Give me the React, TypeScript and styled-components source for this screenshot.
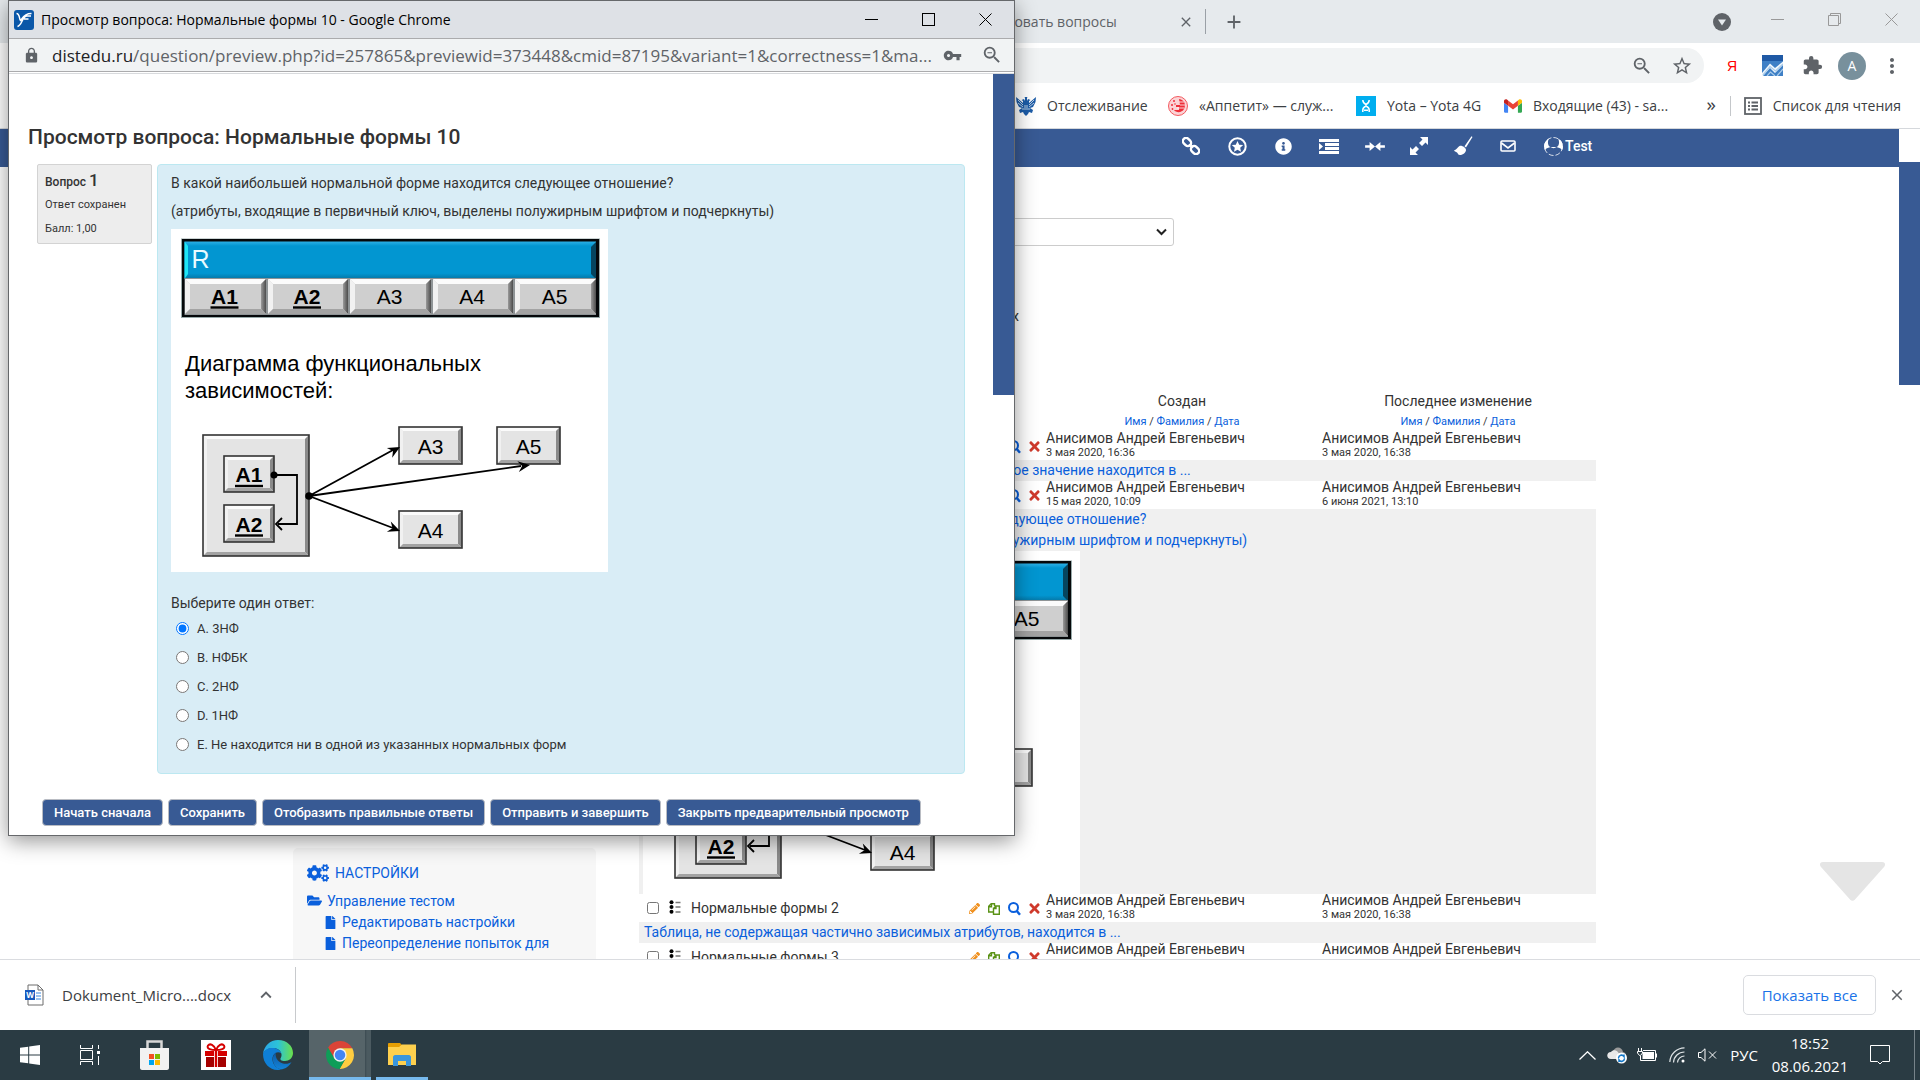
import React from "react";
import styled, { createGlobalStyle, css } from "styled-components";
import { MdLock, MdVpnKey, MdStarBorder, MdExtension, MdMoreVert, MdZoomOut, MdAdd, MdClose, MdKeyboardArrowUp } from "react-icons/md";
import { FaCogs, FaFolderOpen, FaFile, FaInfoCircle, FaTimes, FaPencilAlt } from "react-icons/fa";

const GlobalStyle = createGlobalStyle`
  *, *::before, *::after { box-sizing: border-box; }
  html, body, #root { height: 100%; margin: 0; }
  body { overflow: hidden; background: #fff; }
  button, input, select { font: inherit; margin: 0; }
  a { color: #0a5fdc; text-decoration: none; }
  p, h1, h2, ul { margin: 0; padding: 0; }
  ul { list-style: none; }
`;

const uiFont = `"Open Sans", "Noto Sans", sans-serif`;
const siteFont = `Roboto, "Liberation Sans", sans-serif`;
const navy = "#385a94";

const Desktop = styled.div`
  position: relative;
  height: 100vh;
  display: flex;
  flex-direction: column;
  overflow: hidden;
  font-family: ${uiFont};
  font-size: 14px;
  color: #3c4043;
`;

const iconButton = css`
  border: 0;
  padding: 0;
  background: none;
  color: inherit;
  display: flex;
  align-items: center;
  justify-content: center;
`;

const IconButton = styled.button<{ $w?: number; $h?: number }>`
  ${iconButton}
  flex: none;
  width: ${(p) => p.$w ?? 40}px;
  height: ${(p) => p.$h ?? 30}px;
`;

/* ---------- main browser window ---------- */

const Browser = styled.main`
  flex: 1;
  min-height: 0;
  display: flex;
  flex-direction: column;
`;

const TabStrip = styled.div`
  flex: none;
  height: 43px;
  display: flex;
  align-items: center;
  background: #e6eaed;
  color: #5f6368;
`;

const Tab = styled.div`
  width: 1206px;
  height: 25px;
  display: flex;
  align-items: center;
  justify-content: flex-end;
  border-right: 1px solid #9aa0a6;
  span { width: 216px; }
`;

const Spacer = styled.div`
  flex: 1;
`;

const CaptionButtons = styled.div`
  display: flex;
  align-self: flex-start;
  height: 38px;
  margin-left: 13px;
  color: #999;
`;

const Toolbar = styled.div`
  flex: none;
  height: 45px;
  display: flex;
  align-items: center;
  padding: 0 8px 0 120px;
  color: #5f6368;
`;

const Omnibox = styled.div`
  flex: 1;
  height: 35px;
  margin-right: 8px;
  padding-right: 2px;
  display: flex;
  align-items: center;
  border-radius: 18px;
  background: #f1f3f4;
`;

const OmniboxInput = styled.input`
  flex: 1;
  min-width: 0;
  border: 0;
  padding: 0 20px;
  background: none;
`;

const YandexMark = styled.span`
  color: #f00;
  font: 14px/20px "Liberation Sans", sans-serif;
`;

const Avatar = styled.button`
  ${iconButton}
  width: 28px;
  height: 28px;
  margin: 0 6px;
  border-radius: 50%;
  background: #78909c;
  color: #fff;
  font-size: 14px;
`;

const BookmarksBar = styled.nav`
  flex: none;
  height: 41px;
  padding: 0 19px 5px 1016px;
  display: flex;
  align-items: center;
  border-bottom: 1px solid #d5d8dc;
  white-space: nowrap;
`;

const Bookmark = styled.a<{ $w?: number }>`
  flex: none;
  width: ${(p) => (p.$w ? `${p.$w}px` : "auto")};
  display: flex;
  align-items: center;
  gap: 11px;
  color: #3c4043;
`;

const Chevrons = styled.button`
  ${iconButton}
  width: 17px;
  margin-bottom: 4px;
  font-size: 19px;
`;

const Divider = styled.span`
  width: 1px;
  height: 20px;
  margin: 0 13px 0 10px;
  background: #c4c7ca;
`;

const Viewport = styled.div`
  flex: 1;
  min-height: 0;
  display: flex;
  overflow: hidden;
  font-family: ${siteFont};
  color: #333;
`;

const Page = styled.div`
  position: relative;
  flex: 1;
  min-width: 0;
  overflow: hidden;
`;

const ScrollTrack = styled.div<{ $top: number }>`
  flex: none;
  width: 21px;
  padding-top: ${(p) => p.$top}px;
  background: #fff;
`;

const ScrollThumb = styled.div<{ $h: number }>`
  height: ${(p) => p.$h}px;
  background: ${navy};
`;

const SiteNav = styled.nav`
  height: 38px;
  display: flex;
  align-items: center;
  padding: 0 307px 4px 1168px;
  background: ${navy};
  color: #fff;
`;

const UserLink = styled.a`
  display: flex;
  align-items: center;
  gap: 2px;
  padding-left: 14px;
  color: #fff;
  font-size: 14px;
  font-weight: 500;
`;

const Columns = styled.div`
  display: grid;
  grid-template-columns: 303px minmax(0, 1fr);
  column-gap: 43px;
  padding: 0 303px 0 293px;
`;

const SettingsBlock = styled.section`
  align-self: start;
  margin-top: 681px;
  padding: 12px 14px;
  border-radius: 5px;
  background: #f7f7f7;
  color: #0a5fdc;
  font-size: 14px;
  line-height: 21px;
`;

const BlockTitle = styled.h2`
  display: flex;
  align-items: center;
  gap: 6px;
  height: 26px;
  margin-bottom: 5px;
  font-size: 14px;
  font-weight: 400;
`;

const TreeItem = styled.li<{ $level: number }>`
  padding-left: ${(p) => p.$level * 17}px;
  svg { margin-right: 5px; vertical-align: -2px; }
`;

const BankColumn = styled.section`
  padding-top: 51px;
`;

const CategorySelect = styled.select`
  display: block;
  width: 535px;
  height: 28px;
  padding: 0 8px;
  border: 1px solid #ccc;
  border-radius: 3px;
  background: #fff;
  color: #333;
  font-size: 14px;
  appearance: none;
`;

const SelectWrap = styled.div`
  position: relative;
  width: 535px;
  svg { position: absolute; right: 7px; top: 10px; pointer-events: none; }
`;

const FilterLine = styled.label`
  display: flex;
  align-items: center;
  gap: 5px;
  width: 380px;
  justify-content: flex-end;
  height: 20px;
  margin: 60px 0 65px;
  font-size: 14px;
  white-space: nowrap;
`;

const BankTable = styled.table`
  width: 100%;
  table-layout: fixed;
  border-collapse: collapse;
  font-size: 14px;
  td, th { padding: 0 2px; font-weight: 400; }
`;

const HeadCell = styled.th`
  height: 41px;
  line-height: 21px;
  text-align: center;
  div { font-size: 11px; line-height: 20px; }
`;

const Name = styled.div`
  height: 13px;
  line-height: 13px;
`;

const When = styled.div`
  height: 15px;
  font-size: 11px;
  line-height: 15px;
`;

const RowCheckbox = styled.input`
  display: block;
  width: 12px;
  height: 12px;
  margin-left: 6px;
`;

const Actions = styled.div`
  display: flex;
  margin-left: -4px;
  padding-top: 1px;
`;

const TextCell = styled.td`
  background: #f0f0f0;
  && { padding: 0 5px; }
  line-height: 21px;
  svg { display: block; margin-left: -1px; }
`;

const ToBottom = styled.button`
  ${iconButton}
  position: absolute;
  right: 14px;
  bottom: 58px;
`;

const Downloads = styled.aside`
  flex: none;
  height: 71px;
  padding: 0 2px 0 24px;
  display: flex;
  align-items: center;
  border-top: 1px solid #dadce0;
  background: #fff;
  font-size: 15px;
`;

const DownloadItem = styled.div`
  display: flex;
  align-items: center;
  gap: 18px;
  width: 272px;
  height: 56px;
  border-right: 1px solid #c8cacd;
  svg { flex: none; }
  span { flex: 1; }
  button { margin-left: -18px; }
`;

const ShowAll = styled.button`
  width: 133px;
  height: 40px;
  border: 1px solid #dadce0;
  border-radius: 5px;
  background: #fff;
  color: #1a73e8;
  font-size: 15px;
`;

/* ---------- preview window ---------- */

const Popup = styled.section`
  position: absolute;
  left: 8px;
  top: 0;
  width: 1007px;
  height: 836px;
  display: flex;
  flex-direction: column;
  border: 1px solid #66686b;
  background: #fff;
  box-shadow: 0 5px 20px rgba(0, 0, 0, 0.42);
`;

const TitleBar = styled.header`
  flex: none;
  height: 38px;
  display: flex;
  align-items: center;
  padding-left: 5px;
  border-bottom: 1px solid #ababad;
  background: #dee1e6;
  color: #000;
  span { margin-left: 7px; }
`;

const AddressBar = styled.div`
  flex: none;
  height: 35px;
  display: flex;
  align-items: center;
  padding: 0 2px 2px 14px;
  border-bottom: 1px solid #d8dadd;
  background: #f1f3f4;
  box-shadow: inset 0 -1px #fff, inset 0 -2px #ababad;
  color: #5f6368;
`;

const Url = styled.div`
  flex: 1;
  margin-left: 12px;
  overflow: hidden;
  font-size: 17px;
  white-space: nowrap;
  b { font-weight: 400; color: #202124; }
`;

const PopupBody = styled.div`
  flex: 1;
  min-height: 0;
  display: flex;
  font-family: ${siteFont};
  color: #333;
`;

const Preview = styled.div`
  flex: 1;
  padding: 50px 28px 0 19px;
`;

const PreviewTitle = styled.h1`
  margin-bottom: 14px;
  font-size: 21px;
  font-weight: 500;
  line-height: 26px;
`;

const Question = styled.div`
  display: flex;
  gap: 5px;
  margin-left: 9px;
`;

const InfoBox = styled.div`
  flex: none;
  align-self: flex-start;
  width: 115px;
  height: 80px;
  padding: 4px 7px;
  border: 1px solid #d3d3d3;
  border-radius: 2px;
  background: #ededed;
  font-size: 11px;
  line-height: 24px;
  h2 { font-size: 12px; font-weight: 500; line-height: 22px; }
  h2 b { font-size: 17px; font-weight: 500; }
`;

const Formulation = styled.div`
  flex: 1;
  padding: 9px 13px 14px;
  border: 1px solid #bce8f1;
  border-radius: 4px;
  background: #d9edf6;
  font-size: 14px;
  line-height: 19px;
  p { margin-bottom: 9px; }
  p + p { margin-bottom: 8px; }
  > svg { display: block; }
`;

const Answers = styled.fieldset`
  margin: 22px 0 0;
  padding: 0;
  border: 0;
  font-size: 13px;
  legend { padding: 0; margin-bottom: 1px; font-size: 14px; }
`;

const Answer = styled.label`
  display: flex;
  align-items: center;
  gap: 8px;
  height: 29px;
  padding-left: 5px;
  input { width: 13px; height: 13px; accent-color: #0075ff; }
`;

const ButtonRow = styled.div`
  display: flex;
  gap: 5px;
  margin: 25px 0 0 14px;
`;

const Button = styled.button`
  height: 27px;
  padding: 0 11px;
  border: 1px solid #b9bcc3;
  border-radius: 4px;
  background: ${navy};
  color: #fff;
  font-size: 13px;
  font-weight: 500;
  white-space: nowrap;
`;

/* ---------- taskbar ---------- */

const Taskbar = styled.footer`
  flex: none;
  height: 50px;
  display: flex;
  align-items: stretch;
  padding-right: 5px;
  background: #2a3b43;
  color: #fff;
  font-size: 15px;
`;

const TaskButton = styled.button<{ $w: number; $state?: "active" | "open" }>`
  ${iconButton}
  width: ${(p) => p.$w}px;
  margin-right: ${(p) => (p.$state === "active" ? 5 : 0)}px;
  padding-top: ${(p) => (p.$state ? 3 : 0)}px;
  border-bottom: ${(p) => (p.$state ? "3px solid #76b9ed" : "0")};
  background: ${(p) => (p.$state === "active" ? "linear-gradient(90deg, #566469 56px, #3b4a51 56px, #4b5a60 58px)" : "none")};
`;

const TaskGroup = styled.div`
  display: flex;
  padding-left: 3px;
`;

const Clock = styled.time`
  width: 82px;
  margin: 0 4px 0 3px;
  text-align: center;
  line-height: 23px;
  padding-top: 2px;
`;

const Edge = styled.div`
  width: 1px;
  margin-left: 9px;
  background: #77838a;
`;

/* ---------- drawings ---------- */

const Beveled = ({ x, y, w, h, b = 4, fill = "#e4e4e4", dark = "#8a8a8a" }: { x: number; y: number; w: number; h: number; b?: number; fill?: string; dark?: string }) => (
  <g>
    <rect x={x} y={y} width={w} height={h} fill={fill} />
    <polygon points={`${x},${y} ${x + w},${y} ${x + w - b},${y + b} ${x + b},${y + b}`} fill="#fbfbfb" />
    <polygon points={`${x},${y} ${x + b},${y + b} ${x + b},${y + h - b} ${x},${y + h}`} fill="#f1f1f1" />
    <polygon points={`${x + w},${y} ${x + w},${y + h} ${x + w - b},${y + h - b} ${x + w - b},${y + b}`} fill={dark} />
    <polygon points={`${x},${y + h} ${x + b},${y + h - b} ${x + w - b},${y + h - b} ${x + w},${y + h}`} fill="#a3a3a3" />
  </g>
);

const Node = ({ x, y, w, h, label, bold }: { x: number; y: number; w: number; h: number; label?: string; bold?: boolean }) => (
  <g>
    <Beveled x={x} y={y} w={w} h={h} />
    <rect x={x} y={y} width={w} height={h} fill="none" stroke="#333" strokeWidth="1.6" />
    {label && (
      <text x={x + w / 2} y={y + h / 2 + 8} textAnchor="middle" fontSize="21" fontWeight={bold ? 700 : 400}>
        {label}
      </text>
    )}
    {bold && <path d={`M${x + w / 2 - 14} ${y + h / 2 + 12}h28`} stroke="#000" strokeWidth="2.4" />}
  </g>
);

const ArrowHead = ({ x, y, angle }: { x: number; y: number; angle: number }) => (
  <path d="M0 0L-12 -5.5L-8 0L-12 5.5Z" transform={`translate(${x} ${y}) rotate(${angle})`} />
);

const columnsX = [13, 96, 178, 261, 343, 426];

const Diagram = () => (
  <svg width="437" height="343" viewBox="0 0 437 343" fontFamily='"Liberation Sans", Arial, sans-serif' role="img" aria-label="Диаграмма функциональных зависимостей">
    <defs>
      <linearGradient id="rel" x1="0" y1="0" x2="0" y2="1">
        <stop offset="0" stopColor="#2cb0e6" />
        <stop offset="0.12" stopColor="#0296d1" />
        <stop offset="0.86" stopColor="#0296d1" />
        <stop offset="1" stopColor="#0578a8" />
      </linearGradient>
      <linearGradient id="edgeDark" x1="0" y1="0" x2="1" y2="0">
        <stop offset="0" stopColor="#9a9a9a" />
        <stop offset="1" stopColor="#4c4c4c" />
      </linearGradient>
    </defs>
    <rect width="437" height="343" fill="#fff" />
    <rect x="10" y="9.5" width="419" height="79.5" fill="#9aa" />
    <rect x="11" y="10" width="417" height="78" fill="#05080a" />
    <rect x="13.500" y="12.500" width="411.500" height="37" fill="url(#rel)" />
    <polygon points="13.500,12.500 17,17 17,45 13.500,50" fill="#1fe6f5" />
    <polygon points="425,13 420,18 420,45 425,50" fill="#06455f" />
    <rect x="13.500" y="49" width="411.500" height="37" fill="#8f9496" />
    {columnsX.slice(0, 5).map((x, i) => (
      <g key={x}>
        <Beveled x={x + 1} y={50} w={columnsX[i + 1] - x - 2} h={35} b={5} fill="#cfcfcf" dark="url(#edgeDark)" />
        <text x={(x + columnsX[i + 1]) / 2 - 1} y="74.500" textAnchor="middle" fontSize="21" fontWeight={i < 2 ? 700 : 400}>
          A{i + 1}
        </text>
        {i < 2 && <path d={`M${(x + columnsX[i + 1]) / 2 - 15} 78.500h28`} stroke="#000" strokeWidth="2.4" />}
      </g>
    ))}
    <text x="20.500" y="39" fontSize="25" fill="#e9fbff">R</text>
    <text x="14" y="142" fontSize="22">Диаграмма функциональных</text>
    <text x="14" y="169" fontSize="22">зависимостей:</text>
    <Node x={32} y={206} w={106} h={121} />
    <Node x={53} y={227} w={50} h={36} label="A1" bold />
    <Node x={53} y={276} w={50} h={37} label="A2" bold />
    <Node x={228} y={198} w={63} h={37} label="A3" />
    <Node x={326} y={198} w={63} h={37} label="A5" />
    <Node x={228} y={282} w={63} h={37} label="A4" />
    <g stroke="#000" strokeWidth="1.800" fill="none">
      <path d="M103 246H126V295H107" />
      <path d="M111 289L105 295L111 301" />
      <path d="M138 267L222 221M138 267L350 237M138 267L222 299" />
    </g>
    <circle cx="103" cy="246" r="3.500" />
    <circle cx="138" cy="267" r="3.800" />
    <ArrowHead x={229} y={218} angle={-29} />
    <ArrowHead x={359} y={236} angle={-8} />
    <ArrowHead x={229} y={302} angle={21} />
  </svg>
);

const CaptionIcon = ({ kind }: { kind: "min" | "max" | "restore" | "close" }) => (
  <svg width="13" height="13" viewBox="0 0 13 13" fill="none" stroke="currentColor" strokeWidth="1">
    {kind === "min" && <path d="M0 6.500H13" />}
    {kind === "max" && <rect x="0.500" y="0.500" width="12" height="12" />}
    {kind === "restore" && <path d="M.5 2.500H10.500V12.500H.5ZM2.500 2.500V.5H12.500V10.500H10.500" />}
    {kind === "close" && <path d="M.5.5L12.500 12.500M12.500.5L.5 12.500" />}
  </svg>
);

const SiteLogo = () => (
  <svg width="20" height="20" viewBox="0 0 20 20">
    <rect width="20" height="20" rx="3" fill="#0a57a8" />
    <path d="M2.500 3.500C6 3.500 5 9 6.500 10.500C8.500 9.500 8.500 3.500 17.500 3.500M3.500 16.500C8.500 15 8 6 13 6H17M10 9H14.500" fill="none" stroke="#fff" strokeWidth="1.500" />
  </svg>
);

const ChartExt = () => (
  <svg width="21" height="21" viewBox="0 0 21 21">
    <rect width="21" height="21" fill="#3f80c6" />
    <rect width="21" height="6" fill="#1f59a5" />
    <path d="M0 18L8 8.500L13 13L21 6.500V10L13 18L8 13L1 21H0Z" fill="#f1f7fc" />
    <path d="M1 20L8 11.500L13.500 16L21 9M5 21L8.500 17L13 21M15 21L21 14" fill="none" stroke="#a9cbea" strokeWidth="1.200" />
  </svg>
);

const Eagle = () => (
  <svg width="20" height="20" viewBox="0 0 20 20" fill="#1c5ca8">
    <path d="M0 1L7 7V5L5.500 4L8 3L9 5V2L8.500 1H11.500L11 2V5L12 3L14.500 4L13 5V7L20 1L19.500 6L17 11L14 12L17 14L16 17L13 16L12 18L10 20L8 18L7 16L4 17L3 14L6 12L3 11L.5 6Z" />
    <path d="M2 4L7 9M2 7L7 11M18 4L13 9M18 7L13 11M9 9V14M11 9V14M6 13H8M12 13H14" stroke="#fff" strokeWidth=".7" />
  </svg>
);

const Appetit = () => (
  <svg width="20" height="20" viewBox="0 0 20 20">
    <circle cx="10" cy="10" r="9.500" fill="#fbd3d5" stroke="#f3595f" />
    <path d="M11 3C17 4 18 9 16 13C14 17 8 17 6 14H11V11H8V9H12Z" fill="#ee2e38" />
    <path d="M11 6H16M12 9H17M9 12H16" stroke="#fff" strokeWidth=".8" />
    <g fill="#ee2e38"><circle cx="6" cy="5" r="1" /><circle cx="4" cy="9" r="1" /><circle cx="7" cy="8" r=".8" /><circle cx="4.500" cy="13" r=".9" /></g>
  </svg>
);

const Yota = () => (
  <svg width="20" height="20" viewBox="0 0 20 20">
    <rect width="20" height="20" fill="#00aeef" />
    <path d="M6.800 4C6.800 6 8 7.500 10 8.500C12 7.500 13.200 6 13.200 4M6.800 16V14C6.800 12 8 11 10 10C12 11 13.200 12 13.200 14V16M10 8V10.500M8 14.200H12" stroke="#fff" strokeWidth="1.500" fill="none" />
  </svg>
);

const Gmail = () => (
  <svg width="18" height="14" viewBox="52 42 88 66">
    <path fill="#4285f4" d="M58 108h14V74L52 59v43c0 3.320 2.690 6 6 6" />
    <path fill="#34a853" d="M120 108h14c3.320 0 6-2.690 6-6V59l-20 15" />
    <path fill="#fbbc04" d="M120 48v26l20-15v-8c0-7.420-8.470-11.650-14.400-7.200" />
    <path fill="#ea4335" d="M72 74V48l24 18 24-18v26L96 92" />
    <path fill="#c5221f" d="M52 51v8l20 15V48l-5.600-4.200c-5.940-4.450-14.400-.22-14.400 7.200" />
  </svg>
);

const ReadingList = () => (
  <svg width="18" height="18" viewBox="0 0 18 18" fill="none" stroke="#5f6368" strokeWidth="1.800">
    <rect x="1" y="1" width="16" height="16" />
    <path d="M7.500 5.500H14M7.500 9H14M7.500 12.500H14M4 5.500H6M4 9H6M4 12.500H6" />
  </svg>
);

const DownBadge = () => (
  <svg width="18" height="18" viewBox="0 0 18 18">
    <circle cx="9" cy="9" r="9" fill="#5f6368" />
    <path d="M5 6.500H13L9 12.500Z" fill="#e6eaed" />
  </svg>
);

const ChainIcon = () => (
  <svg width="18" height="18" viewBox="0 0 18 18" fill="none" stroke="#fff" strokeWidth="2.400">
    <g transform="rotate(45 9 9)">
      <rect x="-1.200" y="5.800" width="9" height="6.400" rx="3.200" />
      <rect x="10.200" y="5.800" width="9" height="6.400" rx="3.200" />
      <path d="M6.500 9H11.500" />
    </g>
  </svg>
);

const StarCircle = () => (
  <svg width="19" height="19" viewBox="0 0 19 19">
    <circle cx="9.500" cy="9.500" r="8.200" fill="none" stroke="#fff" strokeWidth="2" />
    <path d="M9.500 4L11.200 7.700L15.200 8.100L12.200 10.800L13 14.700L9.500 12.700L6 14.700L6.800 10.800L3.800 8.100L7.800 7.700Z" fill="#fff" />
  </svg>
);

const IndentIcon = () => (
  <svg width="20" height="15" viewBox="0 0 20 15" fill="#fff">
    <path d="M0 0H20V3H0ZM6 4H20V7H6ZM6 8H20V11H6ZM0 12H20V15H0ZM0 4L4 7.500L0 11Z" />
  </svg>
);

const SqueezeIcon = () => (
  <svg width="22" height="9" viewBox="0 0 22 10" fill="#fff">
    <path d="M0 3.500H5V0L11 5L5 10V6.500H0ZM22 3.500H17V0L11 5L17 10V6.500H22Z" />
  </svg>
);

const ExpandIcon = () => (
  <svg width="18" height="18" viewBox="0 0 18 18" fill="#fff">
    <path d="M10 0H18V8L15.500 5.500L12 9L9 6L12.500 2.500ZM8 18H0V10L2.500 12.500L6 9L9 12L5.500 15.500Z" />
  </svg>
);

const BroomIcon = () => (
  <svg width="19" height="20" viewBox="0 0 19 20" fill="#fff">
    <path d="M18.500 1L12 11.500L10.500 10.300L17.500.3ZM5.500 10C8 9 12 12 12 14C12 17 8 19 6 19C4 19 4 17.500 3 16.500C2 15.500 0 15.500 0 14.500C2 14 4 11 5.500 10Z" />
  </svg>
);

const MailIcon = () => (
  <svg width="16" height="12" viewBox="0 0 16 12" fill="none" stroke="#fff" strokeWidth="1.600">
    <rect x="1" y="1" width="14" height="10" rx="1" />
    <path d="M1.500 3L8 8L14.500 3" />
  </svg>
);

const UserIcon = () => (
  <svg width="19" height="19" viewBox="0 0 19 19">
    <circle cx="9.500" cy="9.500" r="9" fill="none" stroke="#fff" strokeWidth=".8" strokeDasharray="5 2" />
    <path d="M5 1.500C3 5 4 9 6.500 10H12.500C15 9 16 5 14 1.500C19 4 20 10 18 13C17 11 14 10.500 12.500 10C11 11.500 8 11.500 6.500 10C5 10.500 2 11 1 13C-1 10 0 4 5 1.500Z" fill="#fff" />
  </svg>
);

const ChoiceIcon = () => (
  <svg width="12" height="14" viewBox="0 0 12 14">
    <circle cx="2.500" cy="2.200" r="2" /><circle cx="2.500" cy="7" r="2" /><circle cx="2.500" cy="11.800" r="2" />
    <path d="M6.500 2.500H11.500M6.500 7H11.500M6.500 12H11.500" stroke="#777" strokeWidth="1.300" />
  </svg>
);

const CopyIcon = () => (
  <svg width="12" height="12" viewBox="0 0 12 12" fill="none" stroke="#5a9216" strokeWidth="1.400">
    <path d="M5 9H.7V3.200L3.200 .7H6.500V3M.7 3.700H3.500V.7M5.500 5.500L7.800 3H11.300V11.300H5.500V5.500H8V3" />
  </svg>
);

const SearchIcon = () => (
  <svg width="13" height="14" viewBox="0 0 13 14" fill="none" stroke="#0a5fdc" strokeWidth="2">
    <circle cx="5.500" cy="5.500" r="4.500" /><path d="M8.800 9L12 12.800" strokeWidth="2.400" />
  </svg>
);

const WordIcon = () => (
  <svg width="20" height="22" viewBox="0 0 20 22">
    <path d="M4 1H14L19 6V21H4Z" fill="#fff" stroke="#6d6d6d" />
    <path d="M14 1V6H19" fill="none" stroke="#6d6d6d" />
    <path d="M12 9H17M12 12H17M12 15H17" stroke="#3c8ae0" strokeWidth="1.200" />
    <rect x="1" y="6" width="10" height="10" fill="#185abd" />
    <text x="6" y="14" fill="#fff" fontSize="8" fontWeight="700" textAnchor="middle" fontFamily="Open Sans, sans-serif">W</text>
  </svg>
);

const WindowsLogo = () => (
  <svg width="20" height="20" viewBox="0 0 20 20" fill="#fff">
    <path d="M0 2.800L8.200 1.700V9.500H0ZM9.200 1.500L20 0V9.500H9.200ZM0 10.500H8.200V18.300L0 17.200ZM9.200 10.500H20V20L9.200 18.500Z" />
  </svg>
);

const TaskView = () => (
  <svg width="20" height="20" viewBox="0 0 20 20" fill="none" stroke="#fff">
    <path d="M.5 0V3.500H12.500V0M.5 20V16.500H12.500V20M.5 5.500H12.500V14.500H.5ZM18.500 0V4M18.500 11V20" />
    <rect x="17" y="6" width="3" height="3" fill="#fff" stroke="none" />
  </svg>
);

const StoreIcon = () => (
  <svg width="29" height="30" viewBox="0 0 29 30">
    <path d="M7.500 10V1.500H21.500V10" fill="none" stroke="#d8d8d8" strokeWidth="2.500" />
    <path d="M0 8H29V28C29 29 28 30 27 30H2C1 30 0 29 0 28Z" fill="#f2f2f2" />
    <path d="M9 14H14V19H9Z" fill="#f25022" /><path d="M15 14H20V19H15Z" fill="#7fba00" />
    <path d="M9 20H14V25H9Z" fill="#00a4ef" /><path d="M15 20H20V25H15Z" fill="#ffb900" />
  </svg>
);

const GiftIcon = () => (
  <svg width="30" height="30" viewBox="0 0 30 30">
    <rect width="30" height="30" fill="#fff" />
    <path d="M4 11H13V16H4ZM17 11H26V16H17ZM13.800 11H16.200V27H13.800Z" fill="#d50000" />
    <path d="M5 17H13V27H5ZM17 17H25V27H17Z" fill="#a50000" />
    <path d="M15 10C11 10 5 9 7 5.500C9 3 13 5 15 10C17 5 21 3 23 5.500C25 9 19 10 15 10Z" fill="none" stroke="#d50000" strokeWidth="2" />
  </svg>
);

const EdgeIcon = () => (
  <svg width="30" height="30" viewBox="0 0 30 30">
    <defs>
      <linearGradient id="edgeTop" x1="0" x2="1"><stop offset="0" stopColor="#2aa6e8" /><stop offset=".5" stopColor="#2cc3d8" /><stop offset="1" stopColor="#6be04a" /></linearGradient>
      <linearGradient id="edgeLow" x1="0" y1="0" x2="0" y2="1"><stop offset="0" stopColor="#0c59a4" /><stop offset="1" stopColor="#1383d8" /></linearGradient>
    </defs>
    <path d="M0 14C1 6 7 0 15 0C24 0 30 6 30 13C30 18 26 21 22 21C18 21 16.500 19.500 18 17.500C20 14 17 8 10 8C5 8 1 11 0 14Z" fill="url(#edgeTop)" />
    <path d="M0 14C1 10 5 7.500 10 8C14 8 17.500 10.500 18.500 13.500C14 10 9 14 9.500 20C10 25 14 29 19 29.500C9 32 0 25 0 14Z" fill="#0f7fd6" />
    <path d="M13 12.500C9 16 9.500 20 10.500 23C12 27 16 30 20 29C24 28 27 25 28.500 22C26 24 21 24.500 17.500 22.500C13.500 20 12 16 13 12.500Z" fill="url(#edgeLow)" />
  </svg>
);

const ChromeIcon = () => (
  <svg width="28" height="28" viewBox="4 4 40 40">
    <path fill="#db4437" d="M24 14.500H41.600A20 20 0 0 0 6.970 13.520L15.770 28.750Z" />
    <path fill="#ffcd40" d="M32.230 28.750L23.440 43.990A20 20 0 0 0 41.600 14.500H24Z" />
    <path fill="#0f9d58" d="M15.770 28.750L6.970 13.520A20 20 0 0 0 23.440 43.990L32.230 28.750Z" />
    <circle cx="24" cy="24" r="9.500" fill="#f1f1f1" /><circle cx="24" cy="24" r="7.500" fill="#4285f4" />
  </svg>
);

const ExplorerIcon = () => (
  <svg width="28" height="24" viewBox="0 0 28 24">
    <path d="M0 1C0 .5.5 0 1 0H12L14 2V6H0Z" fill="#e59e03" />
    <path d="M0 4H11L14 1.500H28V22H0Z" fill="#fed04e" />
    <path d="M5 23V14C5 13 6 12 7 12H21C22 12 23 13 23 14V23H18V18H10V23Z" fill="#3a96dd" />
  </svg>
);

const TrayChevron = () => (
  <svg width="17" height="9" viewBox="0 0 17 9" fill="none" stroke="#fff" strokeWidth="1.300"><path d="M.5 8.500L8.500 .8L16.500 8.500" /></svg>
);

const CloudIcon = () => (
  <svg width="21" height="18" viewBox="0 0 21 18">
    <path d="M6 6C7 0 15 0 16 6C20 7 20 12 17 12H4Z" fill="#9a9a9a" />
    <path d="M4 13C-1 13 -1 6 4 6C6 3 11 4 12 8L14 13Z" fill="#e8e8e8" />
    <circle cx="14.500" cy="12" r="5.500" fill="#fff" />
    <path d="M11.500 12A3 3 0 0 1 17 10.500V8.500M17.500 12.500A3 3 0 0 1 12 14V16" fill="none" stroke="#1578c8" strokeWidth="1.500" />
  </svg>
);

const BatteryIcon = () => (
  <svg width="20" height="14" viewBox="0 0 20 14" fill="none" stroke="#fff">
    <path d="M6 2.500H18.500V12.500H3.500V8M19.500 5.500V9.500M1.500 0V3M4.500 0V3M.5 3.500H5.500V5L3.500 7.500H2.500L.5 5Z" />
    <rect x="6" y="4.500" width="10.500" height="6" fill="#fff" />
  </svg>
);

const WifiIcon = () => (
  <svg width="16" height="16" viewBox="0 0 16 16" fill="none" stroke="#dfe4e6" strokeWidth="1.200">
    <path d="M.8 15A15 15 0 0 1 15.500 .8M4.500 15.500A11 11 0 0 1 15.500 5M8.500 15.500A7 7 0 0 1 15.500 9" />
    <circle cx="14" cy="14" r="1.500" fill="#fff" stroke="none" />
  </svg>
);

const MuteIcon = () => (
  <svg width="19" height="14" viewBox="0 0 19 14" fill="none" stroke="#fff">
    <path d="M.5 4.500H3L7 .8V13.200L3 9.500H.5ZM11 3.500L18 10.500M18 3.500L11 10.500" />
  </svg>
);

const NoticeIcon = () => (
  <svg width="20" height="20" viewBox="0 0 20 20" fill="none" stroke="#fff"><path d="M.5 .5H19.500V16.500H12.500L10 19L7.500 16.500H.5Z" /></svg>
);

const SelectArrow = () => (
  <svg width="11" height="8" viewBox="0 0 11 8" fill="none" stroke="#222" strokeWidth="2"><path d="M1 1.500L5.500 6L10 1.500" /></svg>
);

/* ---------- question bank ---------- */

type Row = { title: string; created: string; changed: string; text: React.ReactNode };

const author = "Анисимов Андрей Евгеньевич";

const rows: Row[] = [
  {
    title: "Нормальные формы 1",
    created: "3 мая 2020, 16:36",
    changed: "3 мая 2020, 16:38",
    text: <a href="#q1">Таблица, в каждой ячейке которой хранится одно простое значение находится в ...</a>,
  },
  {
    title: "Нормальные формы 10",
    created: "15 мая 2020, 10:09",
    changed: "6 июня 2021, 13:10",
    text: (
      <>
        <a href="#q10">
          В какой наибольшей нормальной форме находится следующее отношение?
          <br />
          (атрибуты, входящие в первичный ключ, выделены полужирным шрифтом и подчеркнуты)
        </a>
        <Diagram />
      </>
    ),
  },
  {
    title: "Нормальные формы 2",
    created: "3 мая 2020, 16:38",
    changed: "3 мая 2020, 16:38",
    text: <a href="#q2">Таблица, не содержащая частично зависимых атрибутов, находится в ...</a>,
  },
  {
    title: "Нормальные формы 3",
    created: "3 мая 2020, 16:38",
    changed: "3 мая 2020, 16:38",
    text: null,
  },
];

const SortLinks = () => (
  <div>
    <a href="#first">Имя</a> / <a href="#last">Фамилия</a> / <a href="#date">Дата</a>
  </div>
);

const QuestionRow = ({ row }: { row: Row }) => (
  <>
    <tr>
      <td><RowCheckbox type="checkbox" aria-label={row.title} /></td>
      <td><ChoiceIcon /></td>
      <td>{row.title}</td>
      <td>
        <Actions>
          <IconButton $w={20} $h={14} aria-label="Редактировать"><FaPencilAlt size={11} color="#f0901e" /></IconButton>
          <IconButton $w={20} $h={14} aria-label="Дублировать"><CopyIcon /></IconButton>
          <IconButton $w={20} $h={14} aria-label="Просмотр"><SearchIcon /></IconButton>
          <IconButton $w={20} $h={14} aria-label="Удалить"><FaTimes size={15} color="#cf3a2c" /></IconButton>
        </Actions>
      </td>
      <td><Name>{author}</Name><When>{row.created}</When></td>
      <td><Name>{author}</Name><When>{row.changed}</When></td>
    </tr>
    {row.text && <tr><TextCell colSpan={6}>{row.text}</TextCell></tr>}
  </>
);

const answers = ["A. 3НФ", "B. НФБК", "C. 2НФ", "D. 1НФ", "E. Не находится ни в одной из указанных нормальных форм"];
const buttons = ["Начать сначала", "Сохранить", "Отобразить правильные ответы", "Отправить и завершить", "Закрыть предварительный просмотр"];

const PreviewWindow = () => (
  <Popup>
    <TitleBar>
      <SiteLogo />
      <span>Просмотр вопроса: Нормальные формы 10 - Google Chrome</span>
      <Spacer />
      <IconButton $w={57} aria-label="Свернуть"><CaptionIcon kind="min" /></IconButton>
      <IconButton $w={57} aria-label="Развернуть"><CaptionIcon kind="max" /></IconButton>
      <IconButton $w={57} aria-label="Закрыть"><CaptionIcon kind="close" /></IconButton>
    </TitleBar>
    <AddressBar>
      <MdLock size={17} />
      <Url><b>distedu.ru</b>/question/preview.php?id=257865&amp;previewid=373448&amp;cmid=87195&amp;variant=1&amp;correctness=1&amp;ma...</Url>
      <IconButton $w={40} aria-label="Пароли"><MdVpnKey size={19} /></IconButton>
      <IconButton $w={40} aria-label="Масштаб"><MdZoomOut size={22} /></IconButton>
    </AddressBar>
    <PopupBody>
      <Preview>
        <PreviewTitle>Просмотр вопроса: Нормальные формы 10</PreviewTitle>
        <Question>
          <InfoBox>
            <h2>Вопрос <b>1</b></h2>
            <div>Ответ сохранен</div>
            <div>Балл: 1,00</div>
          </InfoBox>
          <Formulation>
            <p>В какой наибольшей нормальной форме находится следующее отношение?</p>
            <p>(атрибуты, входящие в первичный ключ, выделены полужирным шрифтом и подчеркнуты)</p>
            <Diagram />
            <Answers>
              <legend>Выберите один ответ:</legend>
              {answers.map((text, i) => (
                <Answer key={text}>
                  <input type="radio" name="answer" defaultChecked={i === 0} />
                  {text}
                </Answer>
              ))}
            </Answers>
          </Formulation>
        </Question>
        <ButtonRow>{buttons.map((text) => <Button key={text}>{text}</Button>)}</ButtonRow>
      </Preview>
      <ScrollTrack $top={0}><ScrollThumb $h={321} /></ScrollTrack>
    </PopupBody>
  </Popup>
);

export default function App() {
  return (
    <Desktop>
      <GlobalStyle />
      <Browser>
        <TabStrip>
          <Tab>
            <span>Редактировать вопросы</span>
            <IconButton $w={38} aria-label="Закрыть вкладку"><MdClose size={16} /></IconButton>
          </Tab>
          <IconButton $w={55} aria-label="Новая вкладка"><MdAdd size={22} /></IconButton>
          <Spacer />
          <IconButton $w={28} aria-label="Поиск вкладок"><DownBadge /></IconButton>
          <CaptionButtons>
            <IconButton $w={57} $h={38} aria-label="Свернуть"><CaptionIcon kind="min" /></IconButton>
            <IconButton $w={57} $h={38} aria-label="Восстановить"><CaptionIcon kind="restore" /></IconButton>
            <IconButton $w={57} $h={38} aria-label="Закрыть"><CaptionIcon kind="close" /></IconButton>
          </CaptionButtons>
        </TabStrip>
        <Toolbar>
          <Omnibox>
            <OmniboxInput aria-label="Адрес" />
            <IconButton aria-label="Масштаб"><MdZoomOut size={22} /></IconButton>
            <IconButton aria-label="В закладки"><MdStarBorder size={22} /></IconButton>
          </Omnibox>
          <IconButton aria-label="Яндекс"><YandexMark>Я</YandexMark></IconButton>
          <IconButton aria-label="Статистика"><ChartExt /></IconButton>
          <IconButton aria-label="Расширения"><MdExtension size={21} /></IconButton>
          <Avatar>A</Avatar>
          <IconButton aria-label="Меню"><MdMoreVert size={24} /></IconButton>
        </Toolbar>
        <BookmarksBar>
          <Bookmark $w={152} href="#b1"><Eagle />Отслеживание</Bookmark>
          <Bookmark $w={188} href="#b2"><Appetit />«Аппетит» — служ...</Bookmark>
          <Bookmark $w={148} href="#b3"><Yota />Yota – Yota 4G</Bookmark>
          <Bookmark $w={170} href="#b4"><Gmail />Входящие (43) - sa...</Bookmark>
          <Spacer />
          <Chevrons>»</Chevrons>
          <Divider />
          <Bookmark href="#list"><ReadingList />Список для чтения</Bookmark>
        </BookmarksBar>
        <Viewport>
          <Page>
            <SiteNav>
              <IconButton $w={46} aria-label="Ссылки"><ChainIcon /></IconButton>
              <IconButton $w={46} aria-label="Избранное"><StarCircle /></IconButton>
              <IconButton $w={46} aria-label="Информация"><FaInfoCircle size={17} /></IconButton>
              <IconButton $w={46} aria-label="Отступ"><IndentIcon /></IconButton>
              <IconButton $w={46} aria-label="Сузить"><SqueezeIcon /></IconButton>
              <IconButton $w={42} aria-label="Во весь экран"><ExpandIcon /></IconButton>
              <IconButton $w={46} aria-label="Очистить"><BroomIcon /></IconButton>
              <IconButton $w={44} aria-label="Сообщения"><MailIcon /></IconButton>
              <UserLink href="#user"><UserIcon />Test</UserLink>
            </SiteNav>
            <Columns>
              <SettingsBlock>
                <BlockTitle><FaCogs size={22} />НАСТРОЙКИ</BlockTitle>
                <ul>
                  <TreeItem $level={0}><FaFolderOpen size={15} /><a href="#quiz">Управление тестом</a></TreeItem>
                  <TreeItem $level={1}><FaFile size={13} /><a href="#edit">Редактировать настройки</a></TreeItem>
                  <TreeItem $level={1}><FaFile size={13} /><a href="#groups">Переопределение попыток для групп</a></TreeItem>
                </ul>
              </SettingsBlock>
              <BankColumn>
                <SelectWrap>
                  <CategorySelect aria-label="Категория"><option>По умолчанию</option></CategorySelect>
                  <SelectArrow />
                </SelectWrap>
                <FilterLine>
                  <input type="checkbox" />
                  Показывать вопросы, находящиеся в подкатегориях
                </FilterLine>
                <BankTable>
                  <colgroup>
                    <col width="28" /><col width="22" /><col /><col width="78" /><col width="276" /><col width="276" />
                  </colgroup>
                  <thead>
                    <tr>
                      <th colSpan={4} />
                      <HeadCell>Создан<SortLinks /></HeadCell>
                      <HeadCell>Последнее изменение<SortLinks /></HeadCell>
                    </tr>
                  </thead>
                  <tbody>{rows.map((row) => <QuestionRow key={row.title} row={row} />)}</tbody>
                </BankTable>
              </BankColumn>
            </Columns>
            <ToBottom aria-label="Вниз">
              <svg width="65" height="39" viewBox="0 0 65 39"><path d="M3 0H62C65 0 66 2.500 64 5L35 37.500Q32.500 40 30 37.500L1 5C-1 2.500 0 0 3 0Z" fill="#e5e5e5" /></svg>
            </ToBottom>
          </Page>
          <ScrollTrack $top={33}><ScrollThumb $h={223} /></ScrollTrack>
        </Viewport>
        <Downloads>
          <DownloadItem>
            <WordIcon />
            <span>Dokument_Micro....docx</span>
            <IconButton $w={58} aria-label="Действия"><MdKeyboardArrowUp size={22} color="#5f6368" /></IconButton>
          </DownloadItem>
          <Spacer />
          <ShowAll>Показать все</ShowAll>
          <IconButton $w={42} aria-label="Закрыть"><MdClose size={18} color="#5f6368" /></IconButton>
        </Downloads>
      </Browser>
      <Taskbar>
        <TaskButton $w={60} aria-label="Пуск"><WindowsLogo /></TaskButton>
        <TaskButton $w={60} aria-label="Представление задач"><TaskView /></TaskButton>
        <TaskGroup>
          <TaskButton $w={62} aria-label="Магазин"><StoreIcon /></TaskButton>
          <TaskButton $w={62} aria-label="Подарки"><GiftIcon /></TaskButton>
          <TaskButton $w={62} aria-label="Edge"><EdgeIcon /></TaskButton>
          <TaskButton $w={62} $state="active" aria-label="Chrome"><ChromeIcon /></TaskButton>
          <TaskButton $w={52} $state="open" aria-label="Проводник"><ExplorerIcon /></TaskButton>
        </TaskGroup>
        <Spacer />
        <TaskButton $w={30} aria-label="Скрытые значки"><TrayChevron /></TaskButton>
        <TaskButton $w={30} aria-label="OneDrive"><CloudIcon /></TaskButton>
        <TaskButton $w={30} aria-label="Батарея"><BatteryIcon /></TaskButton>
        <TaskButton $w={30} aria-label="Сеть"><WifiIcon /></TaskButton>
        <TaskButton $w={30} aria-label="Звук"><MuteIcon /></TaskButton>
        <TaskButton $w={44}>РУС</TaskButton>
        <Clock>18:52<br />08.06.2021</Clock>
        <TaskButton $w={50} aria-label="Уведомления"><NoticeIcon /></TaskButton>
        <Edge />
      </Taskbar>
      <PreviewWindow />
    </Desktop>
  );
}
